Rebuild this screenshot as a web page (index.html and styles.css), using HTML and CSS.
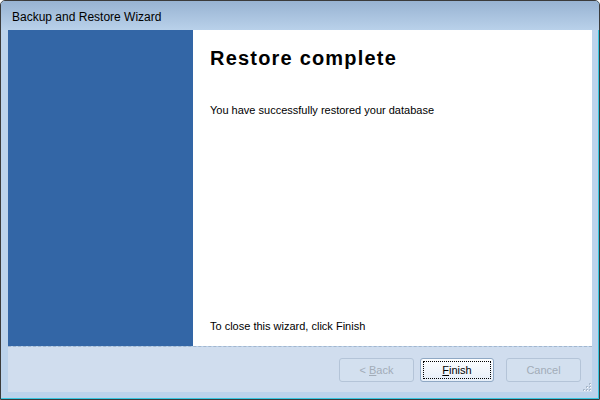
FILE: index.html
```html
<!DOCTYPE html>
<html lang="en">

<head>
    <meta charset="UTF-8">
    <title>Backup and Restore Wizard</title>
    <link rel="stylesheet" href="styles.css">
</head>

<body>
    <div class="window">
        <div class="titlebar">Backup and Restore Wizard</div>
        <div class="client">
            <div class="pages">
                <div class="sidebar"></div>
                <div class="page">
                    <h1>Restore complete</h1>
                    <p class="intro">You have successfully restored your database</p>
                    <p class="outro">To close this wizard, click Finish</p>
                </div>
            </div>
            <div class="buttons">
                <button class="btn" disabled>&lt; <u>B</u>ack</button>
                <button class="btn default"><span class="focus"><u>F</u>inish</span></button>
                <button class="btn cancel" disabled>Cancel</button>
                <svg class="grip" width="10" height="10" viewBox="0 0 10 10">
                    <rect x="8" y="2" width="2" height="2" fill="#a9b9cc"/>
                    <rect x="5" y="5" width="2" height="2" fill="#a9b9cc"/>
                    <rect x="8" y="5" width="2" height="2" fill="#a9b9cc"/>
                    <rect x="2" y="8" width="2" height="2" fill="#a9b9cc"/>
                    <rect x="5" y="8" width="2" height="2" fill="#a9b9cc"/>
                    <rect x="8" y="8" width="2" height="2" fill="#a9b9cc"/>
                    <rect x="9" y="3" width="1" height="1" fill="#fff"/>
                    <rect x="6" y="6" width="1" height="1" fill="#fff"/>
                    <rect x="9" y="6" width="1" height="1" fill="#fff"/>
                    <rect x="3" y="9" width="1" height="1" fill="#fff"/>
                    <rect x="6" y="9" width="1" height="1" fill="#fff"/>
                    <rect x="9" y="9" width="1" height="1" fill="#fff"/>
                </svg>
            </div>
        </div>
    </div>
</body>

</html>
```

FILE: styles.css
```css
html, body {
    margin: 0;
    padding: 0;
    background: #ffffff;
}

.window {
    width: 600px;
    height: 400px;
    box-sizing: border-box;
    display: flex;
    flex-direction: column;
    border: 1px solid #3b3b3b;
    border-radius: 5px 5px 0 0;
    background: #bcd3ec;
    box-shadow: inset -1px -1px 0 #37c6e0;
    font-family: "Liberation Sans", Arial, sans-serif;
    overflow: hidden;
}

.titlebar {
    height: 29px;
    flex: none;
    padding-left: 11px;
    line-height: 33px;
    font-size: 12px;
    color: #000;
    background: linear-gradient(#98b3d2, #b9d1ea);
}

.client {
    flex: 1;
    display: flex;
    flex-direction: column;
    margin: 0 7px 7px 7px;
}

.pages {
    height: 316px;
    display: flex;
    border-bottom: 1px dashed #a3b6cd;
}

.sidebar {
    width: 185px;
    background: #3366a6;
}

.page {
    flex: 1;
    display: flex;
    flex-direction: column;
    padding: 0 17px 13px 17px;
    background: #ffffff;
}

.page h1 {
    margin: 16px 0 0 0;
    font-size: 20px;
    font-weight: bold;
    letter-spacing: 1.2px;
    line-height: 24px;
}

.page p {
    margin: 0;
    font-size: 11px;
    line-height: 13px;
}

.intro {
    margin-top: 34px !important;
}

.outro {
    margin-top: auto !important;
}

.buttons {
    flex: 1;
    position: relative;
    display: flex;
    align-items: flex-start;
    justify-content: flex-end;
    gap: 6px;
    padding: 11px 11px 0 0;
    background: #d0ddee;
}

.btn {
    width: 75px;
    height: 24px;
    padding: 0;
    border: 1px solid #b4c4d8;
    border-radius: 3px;
    background: #d3e0ef;
    font-family: "Liberation Sans", Arial, sans-serif;
    font-size: 11px;
    color: #a2acb8;
}

.btn.default {
    width: 74px;
    border-color: #8fa8c4;
    background: linear-gradient(#fdfeff, #e6eef8);
    color: #000;
    padding: 2px;
}

.btn.cancel {
    margin-left: 6px;
}

.focus {
    display: flex;
    align-items: center;
    justify-content: center;
    height: 100%;
    box-sizing: border-box;
    border: 1px dotted #000;
}

.grip {
    position: absolute;
    right: 1px;
    bottom: 1px;
}
```
